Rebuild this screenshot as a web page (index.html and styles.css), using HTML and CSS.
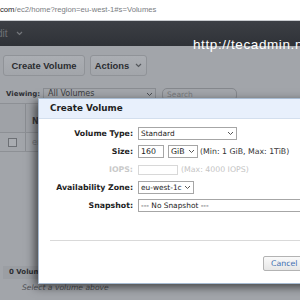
FILE: index.html
```html
<!DOCTYPE html>
<html>
<head>
<meta charset="utf-8">
<link rel="stylesheet" href="styles.css">
</head>
<body>
<div class="urlbar"><span class="host">com</span>/ec2/home?region=eu-west-1#s=Volumes</div>
<div class="topnav"><span class="nav-item">dit</span><svg class="nav-caret" width="7" height="5" viewBox="0 0 7 5"><path d="M1 1l2.5 2.5L6 1" fill="none" stroke="#74777c" stroke-width="1.2"/></svg></div>
<div class="page">
  <div class="toolbar">
    <div class="btn btn-create">Create Volume</div>
    <div class="btn btn-actions">Actions <svg width="7" height="5" viewBox="0 0 7 5"><path d="M1 1l2.5 2.5L6 1" fill="none" stroke="#55585d" stroke-width="1.2"/></svg></div>
  </div>
  <div class="filter">
    <span class="filter-label">Viewing:</span>
    <div class="fselect">All Volumes<svg width="7" height="5" viewBox="0 0 7 5"><path d="M1 1l2.5 2.5L6 1" fill="none" stroke="#4a4d52" stroke-width="1"/></svg></div>
    <div class="search">Search</div>
  </div>
  <div class="vtable">
    <div class="vrow vhead"><div class="cell c1"></div><div class="cell c2">Name</div></div>
    <div class="vrow"><div class="cell c1"><span class="chk"></span></div><div class="cell c2 muted">empty</div></div>
  </div>
  <div class="summary"><span class="count">0 Volumes</span></div>
  <div class="hint">Select a volume above</div>
</div>
<div class="watermark">http://tecadmin.net</div>
<div class="modal">
  <div class="modal-head">Create Volume</div>
  <div class="modal-body">
    <div class="form">
      <label class="lbl">Volume Type:</label>
      <div class="ctl"><div class="sel sel-type">Standard<svg width="7" height="5" viewBox="0 0 7 5"><path d="M1 1l2.5 2.5L6 1" fill="none" stroke="#555" stroke-width="1"/></svg></div></div>
      <label class="lbl">Size:</label>
      <div class="ctl"><div class="inp inp-size">160</div><div class="sel sel-gib">GiB<svg width="7" height="5" viewBox="0 0 7 5"><path d="M1 1l2.5 2.5L6 1" fill="none" stroke="#555" stroke-width="1"/></svg></div><span class="note">(Min: 1 GiB, Max: 1TiB)</span></div>
      <label class="lbl dis">IOPS:</label>
      <div class="ctl"><div class="inp inp-iops dis-inp"></div><span class="note dis">(Max: 4000 IOPS)</span></div>
      <label class="lbl">Availability Zone:</label>
      <div class="ctl"><div class="sel sel-az">eu-west-1c<svg width="7" height="5" viewBox="0 0 7 5"><path d="M1 1l2.5 2.5L6 1" fill="none" stroke="#555" stroke-width="1"/></svg></div></div>
      <label class="lbl">Snapshot:</label>
      <div class="ctl"><div class="sel sel-snap">--- No Snapshot ---</div></div>
    </div>
    <div class="sep"></div>
    <div class="modal-foot"><div class="cancel">Cancel</div></div>
  </div>
</div>
</body>
</html>
```
FILE: styles.css
```css
html, body {
  margin: 0;
  padding: 0;
}
body {
  width: 300px;
  height: 300px;
  overflow: hidden;
  position: relative;
  background: #a2a5aa;
  font-family: "DejaVu Sans", Verdana, sans-serif;
}
.urlbar {
  height: 20px;
  background: #fff;
  border-bottom: 1px solid #c9ccd0;
  font-family: "Liberation Sans", Arial, sans-serif;
  font-size: 7.7px;
  line-height: 20px;
  color: #7a7d82;
  white-space: nowrap;
}
.urlbar .host { color: #222; }
.topnav {
  height: 25px;
  background: linear-gradient(#3c3f45, #2f3237);
  display: flex;
  align-items: center;
  gap: 8px;
  margin-left: -3px;
  font-family: "Liberation Sans", Arial, sans-serif;
  font-size: 10px;
  color: #6e7176;
}
.page {
  display: flex;
  flex-direction: column;
}
.toolbar {
  display: flex;
  gap: 5px;
  padding: 9px 0 0 3px;
}
.btn {
  height: 19px;
  border: 1px solid #909398;
  border-radius: 3px;
  background: linear-gradient(#abaeb3, #a2a5aa);
  font-family: "Liberation Sans", Arial, sans-serif;
  font-weight: bold;
  font-size: 9.4px;
  color: #2b2d31;
  display: flex;
  align-items: center;
  justify-content: center;
  gap: 6px;
}
.btn-create { width: 80px; }
.btn-actions { width: 55px; }
.filter {
  display: flex;
  align-items: center;
  margin-top: 12px;
  height: 12px;
}
.filter-label {
  font-size: 7px;
  font-weight: bold;
  color: #2f3135;
  margin-left: 6px;
  width: 37px;
}
.fselect {
  width: 113px;
  height: 12px;
  border: 1px solid #8a8d92;
  box-sizing: border-box;
  font-size: 8px;
  line-height: 10px;
  padding: 0 2px 0 4px;
  color: #3a3c40;
  display: flex;
  align-items: center;
  justify-content: space-between;
}
.search {
  margin-left: 6px;
  width: 75px;
  height: 13px;
  border: 1px solid #85888d;
  border-radius: 5px;
  box-sizing: border-box;
  font-size: 7.5px;
  line-height: 11px;
  padding-left: 4px;
  color: #77797d;
}
.vtable {
  margin-top: 3px;
  border-top: 1px solid #8d9095;
}
.vrow {
  display: flex;
  height: 18px;
  border-bottom: 1px solid #8d9095;
}
.vhead {
  height: 28px;
  background: #9fa2a7;
}
.cell {
  display: flex;
  align-items: center;
  font-size: 8px;
  color: #3d3f43;
}
.c1 {
  width: 25px;
  justify-content: center;
  border-right: 1px solid #8a8d92;
}
.vhead .c2 { font-weight: bold; padding-top: 6px; }
.c2 { padding-left: 6px; }
.muted { color: #77797e; }
.chk {
  width: 7px;
  height: 7px;
  border: 1px solid #6d7075;
  background: #a9acb1;
}
.summary {
  margin-top: 107px;
  padding-left: 3px;
}
.count {
  display: inline-block;
  width: 90px;
  height: 13px;
  background: #9b9ea3;
  font-size: 7px;
  font-weight: bold;
  line-height: 13px;
  padding-left: 6px;
  color: #2e3034;
}
.hint {
  margin-top: 4px;
  padding-left: 22px;
  font-size: 7.6px;
  font-style: oblique;
  color: #4f5155;
}
.watermark {
  position: absolute;
  left: 193px;
  top: 37px;
  font-family: "Liberation Sans", Arial, sans-serif;
  font-size: 13.5px;
  letter-spacing: 0.6px;
  color: #fff;
  white-space: nowrap;
}
.modal {
  position: absolute;
  left: 38px;
  top: 98px;
  width: 275px;
  height: 184px;
  background: #fff;
  border: 1px solid #a8bcd3;
  box-shadow: -3px 3px 9px rgba(0, 0, 0, 0.6);
  display: flex;
  flex-direction: column;
}
.modal-head {
  height: 19px;
  background: #e8f0fc;
  border-bottom: 1px solid #d3dfee;
  font-size: 8.8px;
  font-weight: bold;
  line-height: 19px;
  padding-left: 11px;
  color: #1e1f22;
}
.modal-body {
  flex: 1;
  display: flex;
  flex-direction: column;
}
.form {
  display: grid;
  grid-template-columns: 94px 1fr;
  column-gap: 5px;
  row-gap: 5px;
  margin-top: 8px;
  align-items: center;
}
.lbl {
  text-align: right;
  font-size: 7.8px;
  font-weight: bold;
  color: #222;
}
.lbl.dis { color: #c9c9c9; }
.ctl {
  display: flex;
  align-items: center;
  height: 13px;
}
.sel, .inp {
  height: 13px;
  box-sizing: border-box;
  border: 1px solid #a6a6a6;
  font-size: 7.4px;
  line-height: 11px;
  padding: 0 2px 0 2px;
  color: #222;
  display: flex;
  align-items: center;
  justify-content: space-between;
  white-space: nowrap;
}
.sel-type { width: 99px; }
.inp-size { width: 26px; font-size: 7.8px; }
.sel-gib { width: 30px; margin-left: 4px; font-size: 7.8px; }
.note {
  font-size: 7.8px;
  color: #333;
  margin-left: 2px;
  white-space: nowrap;
}
.note.dis { color: #c4c4c4; margin-left: 3px; }
.inp-iops { width: 40px; border-color: #d8d8d8; height: 10px; }
.sel-az { width: 56px; }
.sel-snap { width: 180px; }
.sep {
  margin: 28px 0 0 11px;
  height: 1px;
  background: #d9d9d9;
}
.modal-foot {
  display: flex;
  padding: 15px 0 0 224px;
}
.cancel {
  width: 45px;
  height: 15px;
  box-sizing: border-box;
  border: 1px solid #b3b3b3;
  border-radius: 2px;
  background: linear-gradient(#fafafa, #e6e6e6);
  font-size: 7.8px;
  line-height: 13px;
  padding-left: 7px;
  color: #3c6db0;
}
```
